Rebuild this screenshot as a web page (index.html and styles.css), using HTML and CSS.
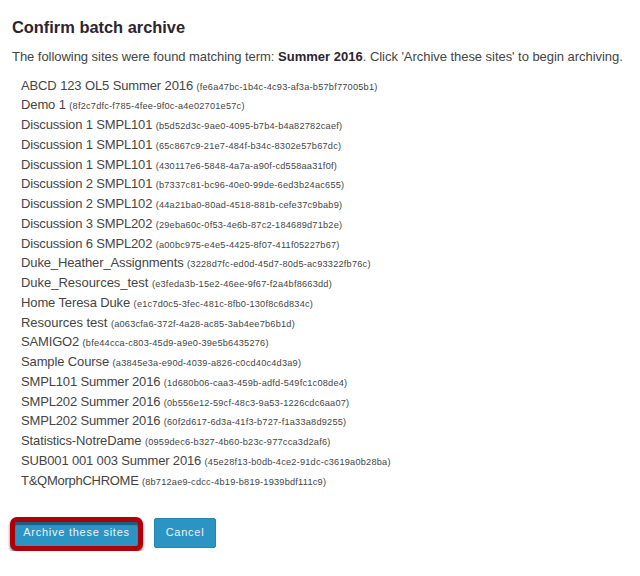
FILE: index.html
```html
<!DOCTYPE html>
<html lang="en">
<head>
<meta charset="utf-8">
<title>Confirm batch archive</title>
<link rel="stylesheet" href="styles.css">
</head>
<body>
<main class="page">
<h1 class="title">Confirm batch archive</h1>
<p class="intro">The following sites were found matching term: <strong>Summer 2016</strong>. Click 'Archive these sites' to begin archiving.</p>
<ul class="sites">
<li>ABCD 123 OL5 Summer 2016 <small>(fe6a47bc-1b4c-4c93-af3a-b57bf77005b1)</small></li>
<li>Demo 1 <small>(8f2c7dfc-f785-4fee-9f0c-a4e02701e57c)</small></li>
<li class="tight">Discussion 1 SMPL101 <small>(b5d52d3c-9ae0-4095-b7b4-b4a82782caef)</small></li>
<li class="tight">Discussion 1 SMPL101 <small>(65c867c9-21e7-484f-b34c-8302e57b67dc)</small></li>
<li class="tight">Discussion 1 SMPL101 <small>(430117e6-5848-4a7a-a90f-cd558aa31f0f)</small></li>
<li class="tight">Discussion 2 SMPL101 <small>(b7337c81-bc96-40e0-99de-6ed3b24ac655)</small></li>
<li class="tight">Discussion 2 SMPL102 <small>(44a21ba0-80ad-4518-881b-cefe37c9bab9)</small></li>
<li class="tight">Discussion 3 SMPL202 <small>(29eba60c-0f53-4e6b-87c2-184689d71b2e)</small></li>
<li class="tight">Discussion 6 SMPL202 <small>(a00bc975-e4e5-4425-8f07-411f05227b67)</small></li>
<li>Duke_Heather_Assignments <small>(3228d7fc-ed0d-45d7-80d5-ac93322fb76c)</small></li>
<li class="loose">Duke_Resources_test <small>(e3feda3b-15e2-46ee-9f67-f2a4bf8663dd)</small></li>
<li>Home Teresa Duke <small>(e1c7d0c5-3fec-481c-8fb0-130f8c6d834c)</small></li>
<li class="loose">Resources test <small>(a063cfa6-372f-4a28-ac85-3ab4ee7b6b1d)</small></li>
<li class="tight">SAMIGO2 <small>(bfe44cca-c803-45d9-a9e0-39e5b6435276)</small></li>
<li>Sample Course <small>(a3845e3a-e90d-4039-a826-c0cd40c4d3a9)</small></li>
<li class="tight">SMPL101 Summer 2016 <small>(1d680b06-caa3-459b-adfd-549fc1c08de4)</small></li>
<li class="tight">SMPL202 Summer 2016 <small>(0b556e12-59cf-48c3-9a53-1226cdc6aa07)</small></li>
<li class="tight">SMPL202 Summer 2016 <small>(60f2d617-6d3a-41f3-b727-f1a33a8d9255)</small></li>
<li>Statistics-NotreDame <small>(0959dec6-b327-4b60-b23c-977cca3d2af6)</small></li>
<li class="tight">SUB001 001 003 Summer 2016 <small>(45e28f13-b0db-4ce2-91dc-c3619a0b28ba)</small></li>
<li class="tighter">T&amp;QMorphCHROME <small>(8b712ae9-cdcc-4b19-b819-1939bdf111c9)</small></li>
</ul>
<div class="actions">
<div class="highlight"><button class="btn primary">Archive these sites</button></div>
<button class="btn cancel">Cancel</button>
</div>
</main>
</body>
</html>
```
FILE: styles.css
```css
* { box-sizing: border-box; }
body { margin: 0; background: #fff; color: #444; font-family: "Liberation Sans", Arial, sans-serif; font-size: 13px; }
.page { padding: 17px 0 0 12px; }
.title { margin: 0; font-size: 16.4px; line-height: 20px; color: #2b2530; white-space: nowrap; }
.intro { margin: 10px 0 0; line-height: 19px; white-space: nowrap; letter-spacing: -0.045px; }
.intro strong { color: #2b2530; letter-spacing: 0.02px; }
.sites { list-style: none; margin: 9.5px 0 0; padding: 0 0 0 9px; }
.sites li { height: 19.75px; line-height: 19.75px; white-space: nowrap; letter-spacing: -0.12px; }
.sites .tight { letter-spacing: -0.16px; }
.sites .tighter { letter-spacing: -0.27px; }
.sites .loose { letter-spacing: -0.03px; }
.sites li small { font-size: 9.2px; letter-spacing: 0.22px; }
.actions { display: flex; margin: 26.5px 0 0 -2px; }
.highlight { width: 133px; height: 34px; border: 5px solid #ad0009; border-radius: 7px; background: #2b94c3; box-shadow: 0 2px 3px rgba(0, 0, 0, .55), inset 0 3px 1px #1b5f80; }
.btn { display: block; padding: 0; border: 0; color: #e9f5fb; font: 11px/14px "Liberation Sans", Arial, sans-serif; letter-spacing: 0.75px; white-space: nowrap; }
.primary { width: 123px; height: 24px; padding-bottom: 3px; background: transparent; }
.cancel { width: 62px; height: 30px; margin: 1px 0 0 11px; padding-bottom: 2px; border-radius: 2px; background: #2b94c3; border: 1px solid #2385b3; }
```
